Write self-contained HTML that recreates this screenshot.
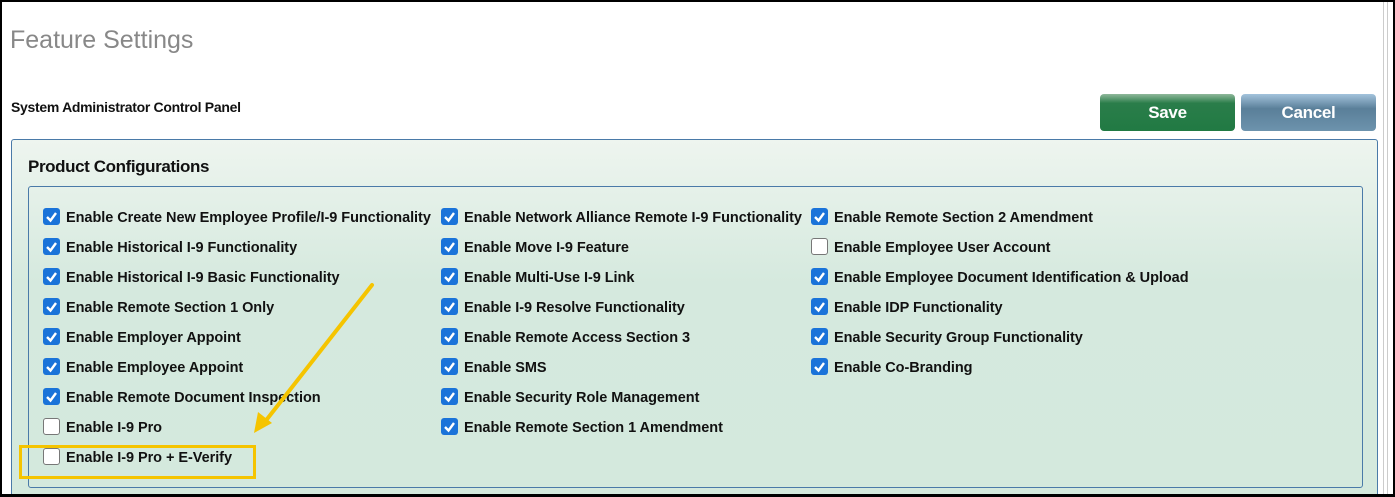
<!DOCTYPE html>
<html><head><style>
*{margin:0;padding:0;box-sizing:border-box}
body{width:1395px;height:497px;background:#000;position:relative;overflow:hidden;font-family:"Liberation Sans",sans-serif}
#page{position:absolute;left:2px;top:2px;width:1391px;height:492px;background:#fff;overflow:hidden}
.sb1{position:absolute;left:1381px;top:0;width:1px;height:492px;background:#ccc}
.sb2{position:absolute;left:1385px;top:0;width:1px;height:492px;background:#ccc}
h1{position:absolute;left:8px;top:24px;font-weight:normal;font-size:25px;color:#888}
.sub{position:absolute;left:9px;top:97px;font-size:14px;font-weight:bold;color:#111;letter-spacing:-0.3px}
.btn{position:absolute;top:92px;height:37px;width:135px;border-radius:4px;color:#fff;font-weight:bold;font-size:17px;text-align:center;line-height:37px;letter-spacing:-0.3px}
.save{left:1098px;background:linear-gradient(#8fb89b 0%,#2a7d4a 25%,#217a43 100%)}
.cancel{left:1239px;background:linear-gradient(#a3c3dc 0%,#5a7f99 40%,#6d93ad 100%)}
.outer{position:absolute;left:9px;top:137px;width:1367px;height:360px;border:1px solid #4a7aa8;border-radius:3px;background:linear-gradient(#eef5ef,#d5e9de 40%,#d4e9dd)}
.pc{position:absolute;left:16px;top:17px;font-size:17px;font-weight:bold;color:#111;letter-spacing:-0.4px}
.inner{position:absolute;left:16px;top:46px;width:1335px;height:302px;border:1px solid #4a7aa8;border-radius:3px}
.it{position:absolute;font-size:14.5px;font-weight:bold;color:#111;letter-spacing:-0.05px;white-space:nowrap;line-height:18px}
.cb{position:absolute;width:17px;height:17px;border-radius:3px}
.on{background:#1a73d9}
.on svg{position:absolute;left:2px;top:2px}
.off{background:#fff;border:1px solid #777}
.hl{position:absolute;left:17px;top:443px;width:237px;height:34px;border:3px solid #f5c400}
</style></head><body>
<div id="page">
<div class="sb1"></div><div class="sb2"></div>
<h1>Feature Settings</h1>
<div class="sub">System Administrator Control Panel</div>
<div class="btn save">Save</div>
<div class="btn cancel">Cancel</div>
<div class="outer">
<div class="pc">Product Configurations</div>
<div class="inner"></div>
</div>
<div id="items"></div>
<div class="hl"></div>
<svg style="position:absolute;left:0;top:0" width="1391" height="492">
<line x1="370" y1="283" x2="262" y2="421" stroke="#f5c400" stroke-width="4" stroke-linecap="round"/>
<polygon points="252,431 256,410 270,421" fill="#f5c400"/>
</svg>
</div>
<script>
var cols=[[41,[
"1Enable Create New Employee Profile/I-9 Functionality","1Enable Historical I-9 Functionality","1Enable Historical I-9 Basic Functionality","1Enable Remote Section 1 Only","1Enable Employer Appoint","1Enable Employee Appoint","1Enable Remote Document Inspection","0Enable I-9 Pro","0Enable I-9 Pro + E-Verify"]],
[439,["1Enable Network Alliance Remote I-9 Functionality","1Enable Move I-9 Feature","1Enable Multi-Use I-9 Link","1Enable I-9 Resolve Functionality","1Enable Remote Access Section 3","1Enable SMS","1Enable Security Role Management","1Enable Remote Section 1 Amendment"]],
[809,["1Enable Remote Section 2 Amendment","0Enable Employee User Account","1Enable Employee Document Identification & Upload","1Enable IDP Functionality","1Enable Security Group Functionality","1Enable Co-Branding"]]];
var h='';
cols.forEach(function(c){c[1].forEach(function(t,i){var y=206+i*30;var on=t[0]=='1';
h+='<div class="cb '+(on?'on':'off')+'" style="left:'+c[0]+'px;top:'+y+'px">'+(on?'<svg width="13" height="13"><path d="M2 7 L5.5 10.5 L11 3" stroke="#fff" stroke-width="2.4" fill="none"/></svg>':'')+'</div>';
h+='<div class="it" style="left:'+(c[0]+23)+'px;top:'+(y+1)+'px">'+t.slice(1).replace('&','&amp;')+'</div>';});});
document.getElementById('items').innerHTML=h;
</script>
</body></html>
